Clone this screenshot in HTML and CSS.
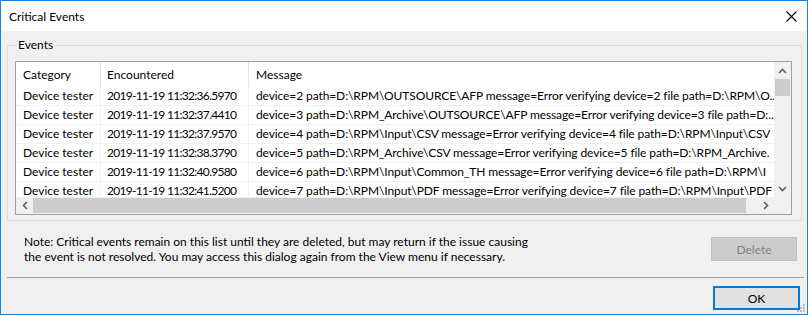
FILE: index.html
```html
<!DOCTYPE html>
<html lang="en">
<head>
    <meta charset="UTF-8">
    <title>Critical Events</title>
    <link rel="stylesheet" href="styles.css">
</head>
<body>
    <div class="window">
        <div class="titlebar">
            <span class="title">Critical Events</span>
            <svg class="close" width="11" height="11" viewBox="0 0 11 11">
                <path d="M0.5 0.5 L10.5 10.5 M10.5 0.5 L0.5 10.5" stroke="#000" stroke-width="1.1" fill="none"/>
            </svg>
        </div>

        <fieldset class="group">
            <legend>Events</legend>
            <div class="list">
                <div class="table">
                    <div class="row head">
                        <div class="cell c1">Category</div>
                        <div class="cell c2">Encountered</div>
                        <div class="cell c3">Message</div>
                    </div>
                    <div class="row">
                        <div class="cell c1">Device tester</div>
                        <div class="cell c2 date">2019-11-19 11:32:36.5970</div>
                        <div class="cell c3 msg">device=2 path=D:\RPM\OUTSOURCE\AFP message=Error verifying device=2 file path=D:\RPM\O..</div>
                    </div>
                    <div class="row">
                        <div class="cell c1">Device tester</div>
                        <div class="cell c2 date">2019-11-19 11:32:37.4410</div>
                        <div class="cell c3 msg">device=3 path=D:\RPM_Archive\OUTSOURCE\AFP message=Error verifying device=3 file path=D:..</div>
                    </div>
                    <div class="row">
                        <div class="cell c1">Device tester</div>
                        <div class="cell c2 date">2019-11-19 11:32:37.9570</div>
                        <div class="cell c3 msg">device=4 path=D:\RPM\Input\CSV message=Error verifying device=4 file path=D:\RPM\Input\CSV</div>
                    </div>
                    <div class="row">
                        <div class="cell c1">Device tester</div>
                        <div class="cell c2 date">2019-11-19 11:32:38.3790</div>
                        <div class="cell c3 msg">device=5 path=D:\RPM_Archive\CSV message=Error verifying device=5 file path=D:\RPM_Archive.</div>
                    </div>
                    <div class="row">
                        <div class="cell c1">Device tester</div>
                        <div class="cell c2 date">2019-11-19 11:32:40.9580</div>
                        <div class="cell c3 msg">device=6 path=D:\RPM\Input\Common_TH message=Error verifying device=6 file path=D:\RPM\I</div>
                    </div>
                    <div class="row">
                        <div class="cell c1">Device tester</div>
                        <div class="cell c2 date">2019-11-19 11:32:41.5200</div>
                        <div class="cell c3 msg">device=7 path=D:\RPM\Input\PDF message=Error verifying device=7 file path=D:\RPM\Input\PDF</div>
                    </div>
                </div>

                <div class="vbar">
                    <div class="sbtn">
                        <svg width="9" height="6" viewBox="0 0 9 6"><path d="M1 5 L4.5 1.5 L8 5" stroke="#606060" stroke-width="1.6" fill="none"/></svg>
                    </div>
                    <div class="vtrack"><div class="vthumb"></div></div>
                    <div class="sbtn">
                        <svg width="9" height="6" viewBox="0 0 9 6"><path d="M1 1 L4.5 4.5 L8 1" stroke="#606060" stroke-width="1.6" fill="none"/></svg>
                    </div>
                </div>

                <div class="hbar">
                    <div class="sbtn">
                        <svg width="6" height="9" viewBox="0 0 6 9"><path d="M5 1 L1.5 4.5 L5 8" stroke="#606060" stroke-width="1.6" fill="none"/></svg>
                    </div>
                    <div class="htrack"><div class="hthumb"></div></div>
                    <div class="sbtn">
                        <svg width="6" height="9" viewBox="0 0 6 9"><path d="M1 1 L4.5 4.5 L1 8" stroke="#606060" stroke-width="1.6" fill="none"/></svg>
                    </div>
                </div>

                <div class="corner"></div>
            </div>
        </fieldset>

        <div class="note-row">
            <p class="note">Note: Critical events remain on this list until they are deleted, but may return if the issue causing<br>the event is not resolved. You may access this dialog again from the View menu if necessary.</p>
            <button class="btn delete" disabled>Delete</button>
        </div>

        <div class="separator"></div>

        <div class="footer">
            <button class="btn ok">OK</button>
        </div>

        <svg class="grip" width="9" height="9" viewBox="0 0 9 9">
            <rect x="7" y="1" width="2" height="2" fill="#b9b9b9"/>
            <rect x="4" y="4" width="2" height="2" fill="#b9b9b9"/>
            <rect x="7" y="4" width="2" height="2" fill="#b9b9b9"/>
            <rect x="1" y="7" width="2" height="2" fill="#b9b9b9"/>
            <rect x="4" y="7" width="2" height="2" fill="#b9b9b9"/>
            <rect x="7" y="7" width="2" height="2" fill="#b9b9b9"/>
        </svg>
    </div>
</body>
</html>
```

FILE: styles.css
```css
* {
    margin: 0;
    padding: 0;
    box-sizing: border-box;
}

body {
    font-family: Lato, "Liberation Sans", sans-serif;
    font-size: 12px;
    color: #000;
    background: #f0f0f0;
}

.window {
    position: relative;
    width: 808px;
    height: 315px;
    border: 1px solid #1883d7;
    background: #f0f0f0;
    display: flex;
    flex-direction: column;
}

.titlebar {
    height: 30px;
    background: #fff;
    display: flex;
    align-items: center;
    justify-content: space-between;
    padding: 0 10px 0 8px;
}

.title {
    font-size: 12px;
}

/* group box */
.group {
    margin: 6px 5px 0 6px;
    padding: 8px 9px 5px 7px;
    border: 1px solid #dcdcdc;
}

.group legend {
    margin-left: 2px;
    padding: 0 1px;
    line-height: 16px;
}

/* list view */
.list {
    height: 154px;
    border: 1px solid #a0a0a0;
    background: #fff;
    display: grid;
    grid-template-columns: 1fr 17px;
    grid-template-rows: 1fr 17px;
}

.table {
    overflow: hidden;
    min-width: 0;
}

.row {
    display: flex;
    height: 19px;
    border-bottom: 1px solid #f0f0f0;
    line-height: 18px;
}

.row.head {
    height: 25px;
    line-height: 25px;
    border-bottom: none;
}

.cell {
    white-space: nowrap;
    overflow: hidden;
    border-right: 1px solid #f0f0f0;
}

.head .cell {
    border-right-color: #e5e5e5;
}

.c1 {
    width: 85px;
    flex: none;
    padding-left: 7px;
}

.c2 {
    width: 148px;
    flex: none;
    padding-left: 6px;
}

.c3 {
    flex: 1;
    min-width: 0;
    padding-left: 7px;
    border-right: none;
}

.date {
    letter-spacing: -0.7px;
}

.msg {
    letter-spacing: -0.1px;
}

/* scrollbars */
.vbar {
    display: flex;
    flex-direction: column;
    background: #f0f0f0;
}

.hbar {
    display: flex;
    background: #f0f0f0;
}

.sbtn {
    width: 17px;
    height: 17px;
    flex: none;
    display: flex;
    align-items: center;
    justify-content: center;
}

.vtrack {
    flex: 1;
}

.vthumb {
    height: 17px;
    margin: 0 1px;
    background: #cdcdcd;
}

.htrack {
    flex: 1;
    padding: 1px 0;
}

.hthumb {
    width: 713px;
    height: 15px;
    background: #cdcdcd;
}

.corner {
    background: #f0f0f0;
}

/* note and buttons */
.note-row {
    display: flex;
    justify-content: space-between;
    align-items: flex-start;
    padding: 12px 10px 0 23px;
}

.note {
    margin-top: 1px;
    line-height: 15px;
}

.btn {
    font-family: inherit;
    font-size: 12px;
    width: 86px;
    height: 24px;
    background: #e1e1e1;
    border: 1px solid #adadad;
    color: #000;
}

.delete {
    margin-top: 4px;
    background: #cccccc;
    border-color: #bfbfbf;
    color: #838383;
}

.separator {
    margin: 13px 3px 0 6px;
    border-top: 1px solid #a0a0a0;
}

.footer {
    display: flex;
    justify-content: flex-end;
    padding: 8px 7px 0 0;
}

.ok {
    width: 87px;
    border: 2px solid #0078d7;
}

.grip {
    position: absolute;
    right: 2px;
    bottom: 2px;
}
```
